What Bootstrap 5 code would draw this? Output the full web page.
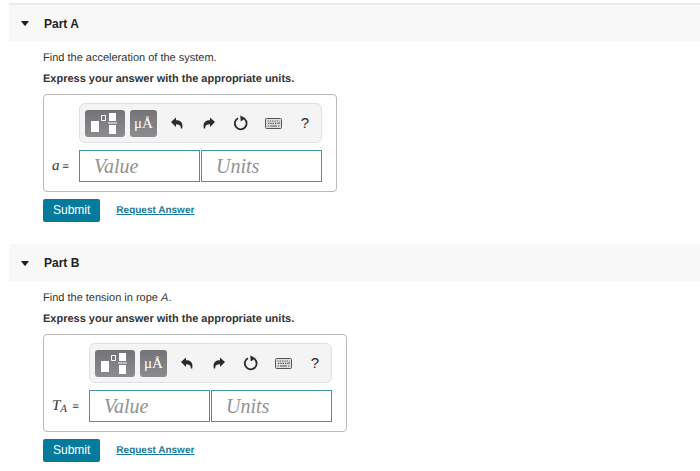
<!DOCTYPE html>
<html lang="en">
<head>
<meta charset="utf-8">
<meta name="viewport" content="width=device-width, initial-scale=1">
<title>Parts A and B</title>
<link href="https://cdn.jsdelivr.net/npm/bootstrap@5.3.0/dist/css/bootstrap.min.css" rel="stylesheet">
<style>
body { font-family: "Liberation Sans", Arial, sans-serif; font-size: 11px; line-height: 21px; color: #333; background: #fff; text-rendering: geometricPrecision; }
main { padding: 3px 0 0 9px; }
.part-head { background: #f8f8f8; height: 38px; padding-left: 12px; }
.part:first-child .part-head { border-top: 2px solid #ebebeb; height: 39px; }
.part-toggle { gap: 15px; color: #222; font-size: 12px; font-weight: 700; line-height: 16px; }
.part-body { padding: 6px 8px 22px 34px; }
.answer-box { display: inline-grid; grid-template-columns: auto auto; column-gap: 10px; row-gap: 7px; border: 1px solid #b9b9b9; border-radius: 4px; padding: 8px 14px 9px 8px; margin-top: 4px; vertical-align: top; }
.tools { grid-column: 2; height: 40px; width: 243px; background: #f4f4f4; border: 1px solid #e0e0e0; border-radius: 6px; padding-left: 5px; }
.tools button { border: 0; background: none; padding: 0; color: #2b2b2b; display: flex; align-items: center; justify-content: center; height: 27px; width: 32px; }
.tools .tile { background: linear-gradient(#737378, #8b8b90); border-radius: 3px; color: #fff; }
.tools .tile-template { width: 40px; margin-right: 5px; }
.tools .tile-units { width: 27px; margin-right: 4px; font: 15px "Liberation Serif", serif; }
.tools .tool-help { font-size: 15px; padding-bottom: 2px; }
.symbol { font: 15px "Liberation Serif", "Times New Roman", serif; white-space: nowrap; width: 17px; display: flex; align-items: baseline; justify-content: space-between; }
.symbol sub { font-size: 11px; bottom: -2px; }
.symbol .eq { font-size: 12px; font-weight: 700; }
.symbol-wide { width: 27px; }
.entry { width: 121px; height: 32px; border: 1px solid #4493ad; border-radius: 0; background: #fff; padding: 0 14px; font: italic 20px "Liberation Serif", "Times New Roman", serif; color: #444; }
.entry::placeholder { color: #929292; opacity: 1; }
.entries { gap: 1px; }
.entries .entry { flex: 1 1 0; min-width: 0; }
.actions { margin-top: 7px; gap: 16px; }
.btn-submit { --bs-btn-color: #fff; --bs-btn-bg: #067a9c; --bs-btn-hover-color: #fff; --bs-btn-hover-bg: #056782; --bs-btn-border-width: 0; --bs-btn-border-radius: 2px; --bs-btn-padding-x: 10px; --bs-btn-padding-y: 0; --bs-btn-font-size: 12px; --bs-btn-line-height: 23px; }
.request { color: #1b7b9b; font-size: 10px; font-weight: 700; }
</style>
<script src="https://cdn.jsdelivr.net/npm/bootstrap@5.3.0/dist/js/bootstrap.bundle.min.js"></script>
</head>
<body>
<svg class="d-none" xmlns="http://www.w3.org/2000/svg">
  <symbol id="caret" viewBox="0 0 8 5"><path fill="currentColor" d="M0 0h8L4.600 4.400q-.6.600-1.200 0z"/></symbol>
  <symbol id="template" viewBox="0 0 40 27"><path fill="#fff" d="M6 11h8v11H6zM24 3h7v8h-7zM24 15h7v9h-7zM23 12.500h9v1h-9z"/><path fill="none" stroke="#fff" d="M16.500 5.500h4v5h-4z"/></symbol>
  <symbol id="undo" viewBox="0 0 12 12"><path fill="currentColor" d="M0 5 5 .5v2.700c5 0 7.300 2.800 6.200 8.300h-1.400C10 8.600 8.600 7.200 5 7.200V10z"/></symbol>
  <symbol id="redo" viewBox="0 0 12 12"><path fill="currentColor" d="M12 5 7 .5v2.700C2 3.200-.3 6 .8 11.500h1.400C2 8.600 3.400 7.200 7 7.200V10z"/></symbol>
  <symbol id="reset" viewBox="0 0 16 16"><path fill="none" stroke="currentColor" stroke-width="1.800" d="M11.500 3.900A5.900 5.900 0 1 1 5 3.200"/><path fill="currentColor" d="M7.200.6 12.600 3.200 7.800 6.400z"/></symbol>
  <symbol id="keys" viewBox="0 0 17 11"><rect x=".5" y=".5" width="16" height="10" rx="1" fill="#e0e0e0" stroke="#555"/><path fill="none" stroke="#555" stroke-width="1.200" stroke-dasharray="1.300 1" d="M2.500 3h12M3 5.300h10"/><path fill="none" stroke="#555" d="M2.500 8h1.500M5 8h7M13 8h1.500M14 4v2"/></symbol>
</svg>
<main>
  <section class="part">
    <div class="part-head d-flex align-items-center">
      <button type="button" class="part-toggle btn p-0 border-0 d-flex align-items-center" data-bs-toggle="collapse" data-bs-target="#part-a" aria-expanded="true" aria-controls="part-a"><svg width="8" height="5" aria-hidden="true"><use href="#caret"/></svg>Part A</button>
    </div>
    <div id="part-a" class="collapse show">
      <div class="part-body">
        <p class="m-0">Find the acceleration of the system.</p>
        <p class="m-0 fw-bold">Express your answer with the appropriate units.</p>
        <div class="answer-box">
          <div class="tools d-flex align-items-center" role="toolbar" aria-label="Part A tools">
            <button type="button" class="tile tile-template" aria-label="Templates"><svg width="40" height="27"><use href="#template"/></svg></button>
            <button type="button" class="tile tile-units">μÅ</button>
            <button type="button" aria-label="Undo"><svg width="12" height="12"><use href="#undo"/></svg></button>
            <button type="button" aria-label="Redo"><svg width="12" height="12"><use href="#redo"/></svg></button>
            <button type="button" aria-label="Reset"><svg width="16" height="16"><use href="#reset"/></svg></button>
            <button type="button" aria-label="Keyboard shortcuts"><svg width="17" height="11"><use href="#keys"/></svg></button>
            <button type="button" class="tool-help">?</button>
          </div>
          <label class="symbol align-self-center" for="value-a"><i>a</i> <span class="eq">=</span></label>
          <div class="entries d-flex">
            <input id="value-a" class="entry" type="text" placeholder="Value">
            <input class="entry" type="text" placeholder="Units" aria-label="Part A units">
          </div>
        </div>
        <div class="actions d-flex align-items-center">
          <button type="button" class="btn btn-submit">Submit</button>
          <a class="request" href="#part-a">Request Answer</a>
        </div>
      </div>
    </div>
  </section>
  <section class="part">
    <div class="part-head d-flex align-items-center">
      <button type="button" class="part-toggle btn p-0 border-0 d-flex align-items-center" data-bs-toggle="collapse" data-bs-target="#part-b" aria-expanded="true" aria-controls="part-b"><svg width="8" height="5" aria-hidden="true"><use href="#caret"/></svg>Part B</button>
    </div>
    <div id="part-b" class="collapse show">
      <div class="part-body pb-0">
        <p class="m-0">Find the tension in rope <i>A</i>.</p>
        <p class="m-0 fw-bold">Express your answer with the appropriate units.</p>
        <div class="answer-box">
          <div class="tools d-flex align-items-center" role="toolbar" aria-label="Part B tools">
            <button type="button" class="tile tile-template" aria-label="Templates"><svg width="40" height="27"><use href="#template"/></svg></button>
            <button type="button" class="tile tile-units">μÅ</button>
            <button type="button" aria-label="Undo"><svg width="12" height="12"><use href="#undo"/></svg></button>
            <button type="button" aria-label="Redo"><svg width="12" height="12"><use href="#redo"/></svg></button>
            <button type="button" aria-label="Reset"><svg width="16" height="16"><use href="#reset"/></svg></button>
            <button type="button" aria-label="Keyboard shortcuts"><svg width="17" height="11"><use href="#keys"/></svg></button>
            <button type="button" class="tool-help">?</button>
          </div>
          <label class="symbol symbol-wide align-self-center" for="value-b"><i>T<sub>A</sub></i> <span class="eq">=</span></label>
          <div class="entries d-flex">
            <input id="value-b" class="entry" type="text" placeholder="Value">
            <input class="entry" type="text" placeholder="Units" aria-label="Part B units">
          </div>
        </div>
        <div class="actions d-flex align-items-center">
          <button type="button" class="btn btn-submit">Submit</button>
          <a class="request" href="#part-b">Request Answer</a>
        </div>
      </div>
    </div>
  </section>
</main>
</body>
</html>
